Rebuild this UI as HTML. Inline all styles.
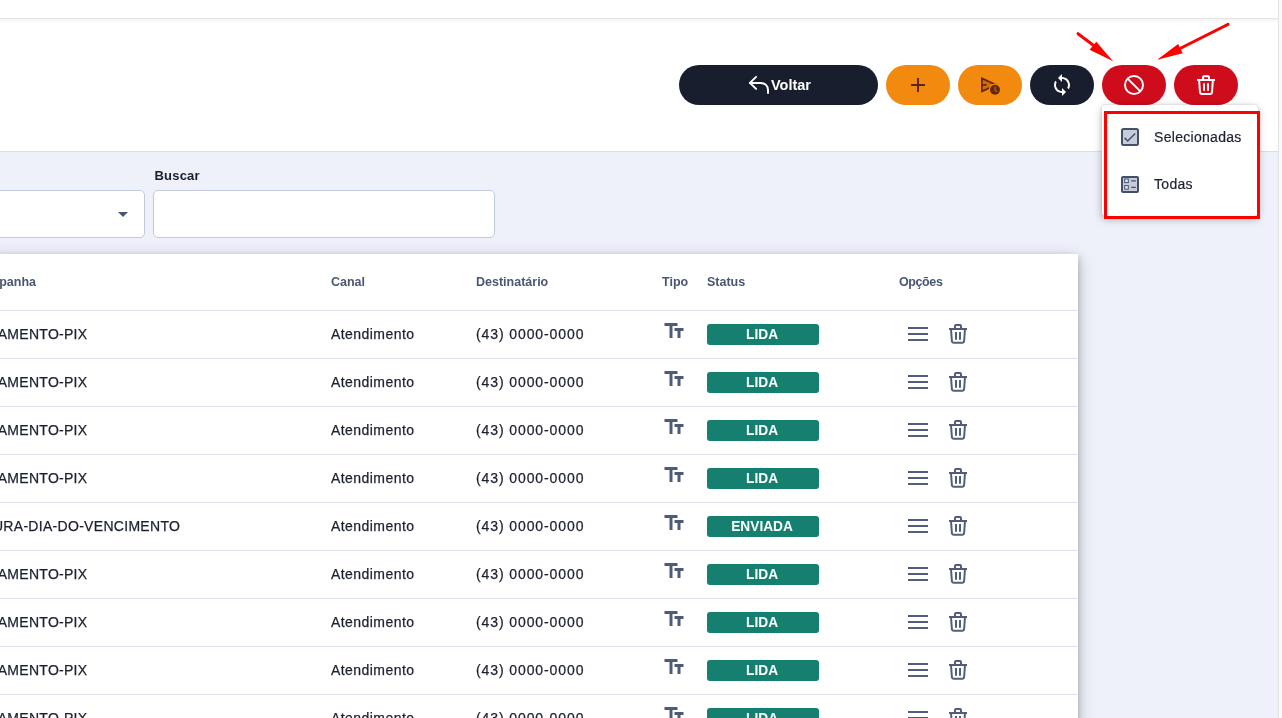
<!DOCTYPE html>
<html lang="pt-BR">
<head>
<meta charset="utf-8">
<title>Mensagens</title>
<style>
*{box-sizing:border-box;margin:0;padding:0}
html,body{width:1282px;height:718px;overflow:hidden;background:#fff}
body{position:relative;font-family:"Liberation Sans",sans-serif;color:#1f2433}
.abs{position:absolute}
/* page chrome */
#topbar{left:0;top:0;width:1278px;height:19px;background:#fff;border-bottom:1px solid #e3e3e3;z-index:5}
#topshadow{left:0;top:19px;width:1278px;height:4px;background:linear-gradient(#f2f2f2,#fff);z-index:4}
#rightline{left:1278px;top:0;width:1px;height:718px;background:#e3e3e3;z-index:50}
#rightstrip{left:1279px;top:0;width:3px;height:718px;background:#fafafa;z-index:50}
#head{left:0;top:19px;width:1278px;height:133px;background:#fff;border-bottom:1px solid #d9deea}
#content{left:0;top:152px;width:1278px;height:566px;background:#eef1f9}
/* buttons */
.btn{position:absolute;top:65px;height:40px;border-radius:20px;display:block}
.dark{background:#191e2e}
.orange{background:#f18a0e}
.red{background:#cf0c1c}
.btn svg{position:absolute}
#voltar span{position:absolute;left:92px;top:11px;font-weight:bold;font-size:14.5px;line-height:18px;color:#fff}
/* filter */
.field{position:absolute;top:190px;height:48px;background:#fff;border:1px solid #c1cadb;border-radius:5px}
#lblbuscar{left:154.5px;top:167.5px;font-size:13px;line-height:16px;font-weight:bold;color:#1a1f2e;letter-spacing:.2px}
/* table */
#card{left:-20px;top:254px;width:1098px;height:480px;background:#fff;box-shadow:0 3px 7px rgba(0,0,0,.26),0 5px 18px rgba(0,0,0,.18)}
.th{position:absolute;top:275px;white-space:nowrap;font-size:12.5px;line-height:15px;font-weight:bold;color:#4a5771}
.row{position:absolute;left:0;width:1078px;height:48px;box-shadow:inset 0 1px 0 #dce2ee}
.row .c{position:absolute;top:15px;font-size:14px;line-height:18px;color:#1b2131;white-space:nowrap;-webkit-text-stroke:.25px #1b2131}
.badge{position:absolute;left:707px;top:14px;width:112px;height:21px;border-radius:3px;background:#15806f;color:#fff;font-weight:bold;font-size:14.7px;line-height:20px;text-align:center}
.badge span{display:inline-block;position:relative;left:-.8px;transform:scaleX(.935)}
.row svg{position:absolute}
/* dropdown */
#menu{left:1102px;top:105px;width:156px;height:110.5px;background:#fff;border-radius:4px;box-shadow:0 3px 9px rgba(0,0,0,.3),0 0 3px rgba(0,0,0,.14);z-index:20}
.mi{position:absolute;left:1154px;font-size:14px;line-height:18px;color:#1b2131;z-index:22;-webkit-text-stroke:.2px #1b2131}
#redbox{left:1103.5px;top:111.4px;width:156.5px;height:107.6px;border:3.2px solid #fd0000;z-index:25}
#arrows{left:0;top:0;z-index:30}
</style>
</head>
<body>
<div id="wrap" style="position:absolute;left:0;top:0;width:1282px;height:718px;will-change:transform">
<div class="abs" id="head"></div>
<div class="abs" id="topbar"></div>
<div class="abs" id="topshadow"></div>
<div class="abs" id="content"></div>

<!-- action buttons -->
<div class="btn dark" id="voltar" style="left:679px;width:199px">
  <svg style="left:68px;top:9px" width="24" height="24" viewBox="0 0 24 24" fill="none" stroke="#fff" stroke-width="1.95" stroke-linecap="round" stroke-linejoin="round"><path d="M9.1 2.9 L2.9 8.9 L9.1 14.9"/><path d="M3 8.9 H13.8 C18 8.9 21 11.9 21 16 V18.9"/></svg>
  <span>Voltar</span>
</div>
<div class="btn orange" style="left:886px;width:64px">
  <svg style="left:24px;top:12px" width="16" height="16" viewBox="0 0 16 16" stroke="#5e2410" stroke-width="2" fill="none"><path d="M8 1v14M1 8h14"/></svg>
</div>
<div class="btn orange" style="left:958px;width:64px">
  <svg style="left:20px;top:8px" width="24" height="24" viewBox="0 0 24 24"><path d="M3.9 5.4 L18.3 11.9 L3.9 18.4 Z" fill="#cf6c10" stroke="#68290b" stroke-width="1.8" stroke-linejoin="miter"/><path d="M3.9 11.9 H8.7" stroke="#68290b" stroke-width="1.7" fill="none"/><circle cx="17" cy="16.8" r="6.3" fill="#f18a0e"/><circle cx="17" cy="16.8" r="5" fill="#68290b"/><path d="M17 13.6 V16.8 L19 18.9" stroke="#c56a12" stroke-width="1.1" fill="none"/></svg>
</div>
<div class="btn dark" style="left:1030px;width:64px">
  <svg style="left:20px;top:8.3px" width="24" height="24" viewBox="0 0 24 24" fill="#fff"><path d="M12 4V1L8 5l4 4V6c3.31 0 6 2.69 6 6 0 1.01-.25 1.97-.7 2.8l1.46 1.46C19.54 15.03 20 13.57 20 12c0-4.42-3.58-8-8-8zm0 14c-3.31 0-6-2.69-6-6 0-1.01.25-1.97.7-2.8L5.24 7.74C4.46 8.97 4 10.43 4 12c0 4.42 3.58 8 8 8v3l4-4-4-4v3z"/></svg>
</div>
<div class="btn red" style="left:1102px;width:64px">
  <svg style="left:20px;top:8px" width="24" height="24" viewBox="0 0 24 24" fill="none" stroke="#fff" stroke-width="1.95"><circle cx="12" cy="12" r="9"/><path d="M5.64 5.64 L18.36 18.36"/></svg>
</div>
<div class="btn red" style="left:1174px;width:64px">
  <svg style="left:20px;top:8px" width="24" height="24" viewBox="0 0 24 24" fill="none" stroke="#fff" stroke-width="2"><path d="M3 7H21"/><path d="M9 7V4.2a1 1 0 0 1 1-1h4a1 1 0 0 1 1 1V7"/><path d="M5.1 7L6 19.2a2 2 0 0 0 2 1.8h8a2 2 0 0 0 2-1.8L18.9 7"/><path d="M10 10.2V17.8M14 10.2V17.8"/></svg>
</div>

<!-- filter -->
<div class="field" style="left:-20px;width:165px"></div>
<div class="abs" style="left:118px;top:212px;width:0;height:0;border-left:5px solid transparent;border-right:5px solid transparent;border-top:5px solid #48566f"></div>
<div class="abs" id="lblbuscar">Buscar</div>
<div class="field" style="left:153px;width:342px"></div>

<!-- table -->
<div class="abs" id="card"></div>
<div class="th" style="right:1246px">Campanha</div>
<div class="th" style="left:331px">Canal</div>
<div class="th" style="left:476px">Destinatário</div>
<div class="th" style="left:662px">Tipo</div>
<div class="th" style="left:707px">Status</div>
<div class="th" style="left:899px;letter-spacing:-.4px">Opções</div>
<div id="rows">
<div class="row" style="top:310px"><div class="c" style="right:990.6px;letter-spacing:.28px">PAGAMENTO-PIX</div><div class="c" style="left:331px;letter-spacing:.44px">Atendimento</div><div class="c" style="left:476px;letter-spacing:.9px">(43) 0000-0000</div><svg style="left:662px;top:9px" width="24" height="24" viewBox="0 0 24 24" fill="#4f5b76"><path d="M2.5 4v3h5v12h3V7h5V4h-13zm19 5h-9v3h3v7h3v-7h3V9z"/></svg><div class="badge"><span>LIDA</span></div><svg style="left:908px;top:17px" width="20" height="14" viewBox="0 0 20 14" fill="#525e78"><rect x="0" y="0" width="20" height="2"/><rect x="0" y="6" width="20" height="2"/><rect x="0" y="12" width="20" height="2"/></svg><svg style="left:946px;top:12px" width="24" height="24" viewBox="0 0 24 24" fill="none" stroke="#525e78" stroke-width="2"><path d="M3 7H21"/><path d="M9 7V4a1 1 0 0 1 1-1h4a1 1 0 0 1 1 1V7"/><path d="M5 7L5.9 19a2 2 0 0 0 2 1.8h8.2a2 2 0 0 0 2-1.8L19 7"/><path d="M10 10.1V17.7M14 10.1V17.7"/></svg></div>
<div class="row" style="top:358px"><div class="c" style="right:990.6px;letter-spacing:.28px">PAGAMENTO-PIX</div><div class="c" style="left:331px;letter-spacing:.44px">Atendimento</div><div class="c" style="left:476px;letter-spacing:.9px">(43) 0000-0000</div><svg style="left:662px;top:9px" width="24" height="24" viewBox="0 0 24 24" fill="#4f5b76"><path d="M2.5 4v3h5v12h3V7h5V4h-13zm19 5h-9v3h3v7h3v-7h3V9z"/></svg><div class="badge"><span>LIDA</span></div><svg style="left:908px;top:17px" width="20" height="14" viewBox="0 0 20 14" fill="#525e78"><rect x="0" y="0" width="20" height="2"/><rect x="0" y="6" width="20" height="2"/><rect x="0" y="12" width="20" height="2"/></svg><svg style="left:946px;top:12px" width="24" height="24" viewBox="0 0 24 24" fill="none" stroke="#525e78" stroke-width="2"><path d="M3 7H21"/><path d="M9 7V4a1 1 0 0 1 1-1h4a1 1 0 0 1 1 1V7"/><path d="M5 7L5.9 19a2 2 0 0 0 2 1.8h8.2a2 2 0 0 0 2-1.8L19 7"/><path d="M10 10.1V17.7M14 10.1V17.7"/></svg></div>
<div class="row" style="top:406px"><div class="c" style="right:990.6px;letter-spacing:.28px">PAGAMENTO-PIX</div><div class="c" style="left:331px;letter-spacing:.44px">Atendimento</div><div class="c" style="left:476px;letter-spacing:.9px">(43) 0000-0000</div><svg style="left:662px;top:9px" width="24" height="24" viewBox="0 0 24 24" fill="#4f5b76"><path d="M2.5 4v3h5v12h3V7h5V4h-13zm19 5h-9v3h3v7h3v-7h3V9z"/></svg><div class="badge"><span>LIDA</span></div><svg style="left:908px;top:17px" width="20" height="14" viewBox="0 0 20 14" fill="#525e78"><rect x="0" y="0" width="20" height="2"/><rect x="0" y="6" width="20" height="2"/><rect x="0" y="12" width="20" height="2"/></svg><svg style="left:946px;top:12px" width="24" height="24" viewBox="0 0 24 24" fill="none" stroke="#525e78" stroke-width="2"><path d="M3 7H21"/><path d="M9 7V4a1 1 0 0 1 1-1h4a1 1 0 0 1 1 1V7"/><path d="M5 7L5.9 19a2 2 0 0 0 2 1.8h8.2a2 2 0 0 0 2-1.8L19 7"/><path d="M10 10.1V17.7M14 10.1V17.7"/></svg></div>
<div class="row" style="top:454px"><div class="c" style="right:990.6px;letter-spacing:.28px">PAGAMENTO-PIX</div><div class="c" style="left:331px;letter-spacing:.44px">Atendimento</div><div class="c" style="left:476px;letter-spacing:.9px">(43) 0000-0000</div><svg style="left:662px;top:9px" width="24" height="24" viewBox="0 0 24 24" fill="#4f5b76"><path d="M2.5 4v3h5v12h3V7h5V4h-13zm19 5h-9v3h3v7h3v-7h3V9z"/></svg><div class="badge"><span>LIDA</span></div><svg style="left:908px;top:17px" width="20" height="14" viewBox="0 0 20 14" fill="#525e78"><rect x="0" y="0" width="20" height="2"/><rect x="0" y="6" width="20" height="2"/><rect x="0" y="12" width="20" height="2"/></svg><svg style="left:946px;top:12px" width="24" height="24" viewBox="0 0 24 24" fill="none" stroke="#525e78" stroke-width="2"><path d="M3 7H21"/><path d="M9 7V4a1 1 0 0 1 1-1h4a1 1 0 0 1 1 1V7"/><path d="M5 7L5.9 19a2 2 0 0 0 2 1.8h8.2a2 2 0 0 0 2-1.8L19 7"/><path d="M10 10.1V17.7M14 10.1V17.7"/></svg></div>
<div class="row" style="top:502px"><div class="c" style="right:897.8px;letter-spacing:.3px">FATURA-DIA-DO-VENCIMENTO</div><div class="c" style="left:331px;letter-spacing:.44px">Atendimento</div><div class="c" style="left:476px;letter-spacing:.9px">(43) 0000-0000</div><svg style="left:662px;top:9px" width="24" height="24" viewBox="0 0 24 24" fill="#4f5b76"><path d="M2.5 4v3h5v12h3V7h5V4h-13zm19 5h-9v3h3v7h3v-7h3V9z"/></svg><div class="badge"><span>ENVIADA</span></div><svg style="left:908px;top:17px" width="20" height="14" viewBox="0 0 20 14" fill="#525e78"><rect x="0" y="0" width="20" height="2"/><rect x="0" y="6" width="20" height="2"/><rect x="0" y="12" width="20" height="2"/></svg><svg style="left:946px;top:12px" width="24" height="24" viewBox="0 0 24 24" fill="none" stroke="#525e78" stroke-width="2"><path d="M3 7H21"/><path d="M9 7V4a1 1 0 0 1 1-1h4a1 1 0 0 1 1 1V7"/><path d="M5 7L5.9 19a2 2 0 0 0 2 1.8h8.2a2 2 0 0 0 2-1.8L19 7"/><path d="M10 10.1V17.7M14 10.1V17.7"/></svg></div>
<div class="row" style="top:550px"><div class="c" style="right:990.6px;letter-spacing:.28px">PAGAMENTO-PIX</div><div class="c" style="left:331px;letter-spacing:.44px">Atendimento</div><div class="c" style="left:476px;letter-spacing:.9px">(43) 0000-0000</div><svg style="left:662px;top:9px" width="24" height="24" viewBox="0 0 24 24" fill="#4f5b76"><path d="M2.5 4v3h5v12h3V7h5V4h-13zm19 5h-9v3h3v7h3v-7h3V9z"/></svg><div class="badge"><span>LIDA</span></div><svg style="left:908px;top:17px" width="20" height="14" viewBox="0 0 20 14" fill="#525e78"><rect x="0" y="0" width="20" height="2"/><rect x="0" y="6" width="20" height="2"/><rect x="0" y="12" width="20" height="2"/></svg><svg style="left:946px;top:12px" width="24" height="24" viewBox="0 0 24 24" fill="none" stroke="#525e78" stroke-width="2"><path d="M3 7H21"/><path d="M9 7V4a1 1 0 0 1 1-1h4a1 1 0 0 1 1 1V7"/><path d="M5 7L5.9 19a2 2 0 0 0 2 1.8h8.2a2 2 0 0 0 2-1.8L19 7"/><path d="M10 10.1V17.7M14 10.1V17.7"/></svg></div>
<div class="row" style="top:598px"><div class="c" style="right:990.6px;letter-spacing:.28px">PAGAMENTO-PIX</div><div class="c" style="left:331px;letter-spacing:.44px">Atendimento</div><div class="c" style="left:476px;letter-spacing:.9px">(43) 0000-0000</div><svg style="left:662px;top:9px" width="24" height="24" viewBox="0 0 24 24" fill="#4f5b76"><path d="M2.5 4v3h5v12h3V7h5V4h-13zm19 5h-9v3h3v7h3v-7h3V9z"/></svg><div class="badge"><span>LIDA</span></div><svg style="left:908px;top:17px" width="20" height="14" viewBox="0 0 20 14" fill="#525e78"><rect x="0" y="0" width="20" height="2"/><rect x="0" y="6" width="20" height="2"/><rect x="0" y="12" width="20" height="2"/></svg><svg style="left:946px;top:12px" width="24" height="24" viewBox="0 0 24 24" fill="none" stroke="#525e78" stroke-width="2"><path d="M3 7H21"/><path d="M9 7V4a1 1 0 0 1 1-1h4a1 1 0 0 1 1 1V7"/><path d="M5 7L5.9 19a2 2 0 0 0 2 1.8h8.2a2 2 0 0 0 2-1.8L19 7"/><path d="M10 10.1V17.7M14 10.1V17.7"/></svg></div>
<div class="row" style="top:646px"><div class="c" style="right:990.6px;letter-spacing:.28px">PAGAMENTO-PIX</div><div class="c" style="left:331px;letter-spacing:.44px">Atendimento</div><div class="c" style="left:476px;letter-spacing:.9px">(43) 0000-0000</div><svg style="left:662px;top:9px" width="24" height="24" viewBox="0 0 24 24" fill="#4f5b76"><path d="M2.5 4v3h5v12h3V7h5V4h-13zm19 5h-9v3h3v7h3v-7h3V9z"/></svg><div class="badge"><span>LIDA</span></div><svg style="left:908px;top:17px" width="20" height="14" viewBox="0 0 20 14" fill="#525e78"><rect x="0" y="0" width="20" height="2"/><rect x="0" y="6" width="20" height="2"/><rect x="0" y="12" width="20" height="2"/></svg><svg style="left:946px;top:12px" width="24" height="24" viewBox="0 0 24 24" fill="none" stroke="#525e78" stroke-width="2"><path d="M3 7H21"/><path d="M9 7V4a1 1 0 0 1 1-1h4a1 1 0 0 1 1 1V7"/><path d="M5 7L5.9 19a2 2 0 0 0 2 1.8h8.2a2 2 0 0 0 2-1.8L19 7"/><path d="M10 10.1V17.7M14 10.1V17.7"/></svg></div>
<div class="row" style="top:694px"><div class="c" style="right:990.6px;letter-spacing:.28px">PAGAMENTO-PIX</div><div class="c" style="left:331px;letter-spacing:.44px">Atendimento</div><div class="c" style="left:476px;letter-spacing:.9px">(43) 0000-0000</div><svg style="left:662px;top:9px" width="24" height="24" viewBox="0 0 24 24" fill="#4f5b76"><path d="M2.5 4v3h5v12h3V7h5V4h-13zm19 5h-9v3h3v7h3v-7h3V9z"/></svg><div class="badge"><span>LIDA</span></div><svg style="left:908px;top:17px" width="20" height="14" viewBox="0 0 20 14" fill="#525e78"><rect x="0" y="0" width="20" height="2"/><rect x="0" y="6" width="20" height="2"/><rect x="0" y="12" width="20" height="2"/></svg><svg style="left:946px;top:12px" width="24" height="24" viewBox="0 0 24 24" fill="none" stroke="#525e78" stroke-width="2"><path d="M3 7H21"/><path d="M9 7V4a1 1 0 0 1 1-1h4a1 1 0 0 1 1 1V7"/><path d="M5 7L5.9 19a2 2 0 0 0 2 1.8h8.2a2 2 0 0 0 2-1.8L19 7"/><path d="M10 10.1V17.7M14 10.1V17.7"/></svg></div>
</div><!--/rows-->

<!-- dropdown -->
<div class="abs" id="menu"></div>
<svg class="abs" style="left:1118px;top:125px;z-index:22" width="24" height="24" viewBox="0 0 24 24"><rect x="4" y="4" width="16" height="16" rx="1.5" fill="#c7ccd8" stroke="#42506c" stroke-width="2"/><path d="M6.6 12.9 L9.7 16 L17.2 8.5" fill="none" stroke="#42506c" stroke-width="1.5"/></svg>
<svg class="abs" style="left:1118px;top:173px;z-index:22" width="24" height="24" viewBox="0 0 24 24"><rect x="4" y="4" width="16" height="15" rx="1" fill="#c7ccd8" stroke="#42506c" stroke-width="2"/><rect x="6.7" y="6" width="3.6" height="3.6" fill="#e9ebf0" stroke="#42506c" stroke-width="1"/><rect x="6.7" y="12.6" width="3.6" height="3.6" fill="#e9ebf0" stroke="#42506c" stroke-width="1"/><path d="M13.2 7.8h4.6M13.2 14.4h4.6" stroke="#42506c" stroke-width="1.2"/></svg>
<div class="mi" style="top:127.75px;letter-spacing:.3px">Selecionadas</div>
<div class="mi" style="top:174.75px;letter-spacing:.3px">Todas</div>
<div class="abs" id="redbox"></div>

<svg class="abs" id="arrows" width="1282" height="120" viewBox="0 0 1282 120">
  <g stroke="#ff0000" stroke-width="3" stroke-linecap="round" fill="#ff0000">
    <path d="M1078 33.7 L1095 46.5" fill="none"/>
    <path d="M1113.1 61.2 L1096.3 41.7 L1089.6 49.8 Z" stroke="none"/>
    <path d="M1228 24.3 L1180 48.5" fill="none"/>
    <path d="M1157.1 59.8 L1178.1 43.9 L1182.7 53.2 Z" stroke="none"/>
  </g>
</svg>

<div class="abs" id="rightline"></div>
<div class="abs" id="rightstrip"></div>
</div>
</body>
</html>
